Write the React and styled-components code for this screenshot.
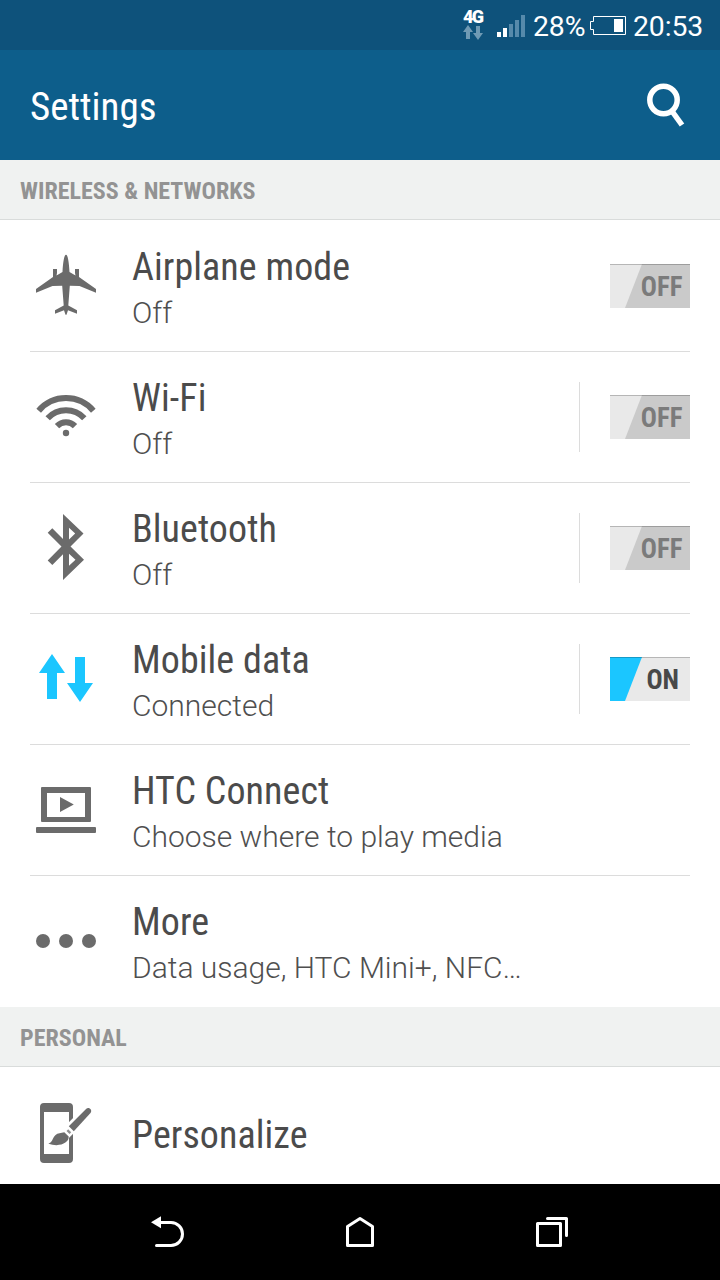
import React, { useState } from "react";
import styled, { createGlobalStyle } from "styled-components";

const GlobalStyle = createGlobalStyle`
  * {
    box-sizing: border-box;
  }

  body {
    margin: 0;
    background: #fff;
    font-family: Roboto, sans-serif;
  }

  button {
    padding: 0;
    border: 0;
    background: transparent;
    font: inherit;
  }

  svg {
    display: block;
  }
`;

const condensed = `
  font-family: "Roboto Condensed", Roboto, sans-serif;
  font-stretch: 75%;
  white-space: nowrap;
`;

const Screen = styled.div`
  display: flex;
  flex-direction: column;
  width: 720px;
  height: 1280px;
  overflow: hidden;
  background: #fff;
`;

const StatusBar = styled.div`
  display: flex;
  align-items: center;
  justify-content: flex-end;
  flex: none;
  height: 50px;
  padding-right: 16px;
  background: #0e527b;
  color: #fff;
`;

const Network = styled.div`
  display: flex;
  flex-direction: column;
  width: 20px;
  height: 50px;
  margin-right: 14px;
  padding-top: 8px;
`;

const NetworkType = styled.span`
  height: 17px;
  font-family: Roboto, sans-serif;
  font-size: 18px;
  font-weight: 900;
  line-height: 17px;
  letter-spacing: -1.6px;
`;

const StatusText = styled.span`
  width: ${(props) => props.width}px;
  padding-top: 4px;
  font-size: 28.4px;
  line-height: 34px;
  letter-spacing: -0.1px;
  white-space: nowrap;
`;

const Header = styled.header`
  display: flex;
  align-items: center;
  justify-content: space-between;
  flex: none;
  height: 110px;
  padding: 0 30px;
  background: #0d5e8b;
  color: #fff;
`;

const Title = styled.h1`
  ${condensed}
  margin: 0;
  padding-top: 3px;
  font-size: 39px;
  font-weight: 400;
  line-height: 46px;
`;

const Content = styled.main`
  flex: 1;
  min-height: 0;
  overflow: hidden;
`;

const SectionTitle = styled.h2`
  ${condensed}
  height: 60px;
  margin: 0;
  padding: 2px 20px 0;
  border-bottom: 1px solid #d9dcdb;
  background: #f0f2f1;
  color: #939393;
  font-size: 24px;
  font-weight: 700;
  line-height: 58px;
`;

const List = styled.div`
  padding: 0 30px 1px;
`;

const Row = styled.div`
  display: flex;
  height: ${(props) => props.height || 131}px;

  & + & {
    border-top: 1px solid #dcdcdc;
  }

  & + & > * {
    margin-top: -1px;
  }
`;

const IconBox = styled.div`
  flex: none;
  width: 102px;
  color: ${(props) => (props.active ? "#1bc6ff" : "#6b6b6b")};
`;

const Labels = styled.div`
  flex: 1;
  padding-top: ${(props) => (props.single ? 45 : 24)}px;
`;

const Name = styled.div`
  ${condensed}
  color: #4b4b4b;
  font-size: 38px;
  line-height: 46px;
  letter-spacing: 0.07px;
`;

const Summary = styled.div`
  color: #4f4f4f;
  font-size: 30px;
  font-weight: 300;
  line-height: 46px;
  white-space: nowrap;
`;

const ToggleArea = styled.div`
  display: flex;
  align-items: center;
  align-self: flex-start;
  height: 70px;
  && {
    margin-top: ${(props) => (props.divided ? 30 : 31)}px;
  }
  padding-left: 30px;
  border-left: 1px solid ${(props) => (props.divided ? "#dcdcdc" : "transparent")};
`;

const ToggleButton = styled.button`
  ${condensed}
  position: relative;
  width: 80px;
  height: 44px;
  background: ${(props) => (props.on ? "#e9e9e9" : "#cacaca")};
  color: ${(props) => (props.on ? "#484848" : "#7b7b7b")};
  font-size: 26.8px;
  font-weight: 700;
  line-height: 46px;
  text-align: right;
  padding-right: ${(props) => (props.on ? 11 : 7.5)}px;

  &::before {
    content: "";
    position: absolute;
    inset: 0;
    background: ${(props) => (props.on ? "#1bc6ff" : "#e9e9e9")};
    clip-path: polygon(0 0, 32px 0, 15px 100%, 0 100%);
  }

  &::after {
    content: "";
    position: absolute;
    inset: 0 0 auto;
    height: 1px;
    background: rgba(0, 0, 0, 0.22);
  }
`;

const NavBar = styled.nav`
  display: flex;
  flex: none;
  height: 96px;
  padding: 0 72px;
  background: #000;
  color: #fff;
`;

const NavButton = styled.button`
  width: 192px;
  color: #fff;
`;

const RowIcon = ({ children }) => (
  <svg width="72" height="116" viewBox="0 0 72 116" fill="currentColor">
    {children}
  </svg>
);

const NavIcon = ({ children }) => (
  <svg
    width="192"
    height="96"
    viewBox="0 0 192 96"
    fill="none"
    stroke="currentColor"
    strokeWidth="3"
    strokeLinecap="round"
    strokeLinejoin="round"
  >
    {children}
  </svg>
);

const icons = {
  airplane: (
    <RowIcon>
      <path d="M36 34.7C37.8 34.7 39 42 39.5 52L45.5 55.5L45 53V49H49V57L66 69V72.8L49.5 66L39.8 65.7L38.3 85.5L47 90.3V93.8L38 90.3L36.5 94.7H35.5L34 90.3L25 93.8V90.3L33.7 85.5L32.2 65.7L22.5 66L6 72.8V69L23 57V49H27V53L26.5 55.5L32.5 52C33 42 34.2 34.7 36 34.7Z" />
    </RowIcon>
  ),
  wifi: (
    <RowIcon>
      <circle cx="36" cy="82" r="3.2" />
      <g fill="none" stroke="currentColor" strokeWidth="6">
        <path d="M8.7 59.7A35.7 35.7 0 0 1 63.3 59.7" />
        <path d="M17.7 67.2A25 25 0 0 1 54.3 67.2" />
        <path d="M27 75.2A12.5 12.5 0 0 1 45 75.2" />
      </g>
    </RowIcon>
  ),
  bluetooth: (
    <RowIcon>
      <path
        fillRule="evenodd"
        d="M33 32L53.5 51.5L40.5 64.6L54 77.7L33 98V72.3L22.3 83L17.7 78.4L31.5 64.6L17.7 50.8L22.3 46.2L33 57ZM39 45.8V57.4L45.2 51.6ZM39 71.7V83.8L45.5 77.7Z"
      />
    </RowIcon>
  ),
  data: (
    <RowIcon>
      <path d="M22 41L35 60H27V86H17V60H9ZM45 44H55V70H63L50 89L37 70H45Z" />
    </RowIcon>
  ),
  connect: (
    <RowIcon>
      <path
        fillRule="evenodd"
        d="M12 43H60Q61 43 61 44V77Q61 78 60 78H12Q11 78 11 77V44Q11 43 12 43ZM17 49V73H55V49ZM30 53L43.8 60.6L30 68Z"
      />
      <rect x="6" y="83" width="60" height="6" rx="1" />
    </RowIcon>
  ),
  more: (
    <RowIcon>
      <circle cx="13" cy="66" r="7" />
      <circle cx="36" cy="66" r="7" />
      <circle cx="59" cy="66" r="7" />
    </RowIcon>
  ),
  personalize: (
    <RowIcon>
      <path
        fillRule="evenodd"
        d="M14 36H39Q43 36 43 40V92Q43 96 39 96H14Q10 96 10 92V40Q10 36 14 36ZM14 45V87H39V45Z"
      />
      <path d="M58 44L34 68" stroke="#fff" strokeWidth="11" />
      <path d="M56.3 41.8C58.8 39.5 62.8 42.8 60.5 46L43.8 64.3L38.8 59.3Z" />
      <path d="M37.7 60.5L42.7 65.5L40.3 68L35.2 63Z" fill="#fff" />
      <path d="M38.2 62.3L41.2 65.3L39.5 67L36.5 64Z" opacity="0.75" />
      <path d="M34.3 65.2L38.7 69.6C39.2 76.2 29 80.6 18.3 76.6C22.8 75.2 22 71.5 25.3 68.2C28 65.6 31 66.2 34.3 65.2Z" />
    </RowIcon>
  ),
};

const networkSettings = [
  { id: "airplane", name: "Airplane mode", summary: "Off", toggle: true },
  { id: "wifi", name: "Wi-Fi", summary: "Off", toggle: true, divided: true },
  { id: "bluetooth", name: "Bluetooth", summary: "Off", toggle: true, divided: true },
  { id: "data", name: "Mobile data", summary: "Connected", toggle: true, divided: true },
  { id: "connect", name: "HTC Connect", summary: "Choose where to play media" },
  { id: "more", name: "More", summary: "Data usage, HTC Mini+, NFC…" },
];

const Setting = ({ id, name, summary, toggle, divided, on, height, onToggle }) => (
  <Row height={height}>
    <IconBox active={on ? 1 : undefined}>{icons[id]}</IconBox>
    <Labels single={summary ? undefined : 1}>
      <Name>{name}</Name>
      {summary && <Summary>{summary}</Summary>}
    </Labels>
    {toggle && (
      <ToggleArea divided={divided ? 1 : undefined}>
        <ToggleButton on={on ? 1 : undefined} onClick={() => onToggle(id)}>
          {on ? "ON" : "OFF"}
        </ToggleButton>
      </ToggleArea>
    )}
  </Row>
);

const Status = () => (
  <StatusBar>
    <Network>
      <NetworkType>4G</NetworkType>
      <svg width="20" height="15" viewBox="0 0 20 15" fill="#6f9ab4">
        <path d="M5 0L10 7H7V14H3V7H0ZM13 1H17V8H20L15 15L10 8H13Z" />
      </svg>
    </Network>
    <svg width="36" height="50" viewBox="0 0 36 50" fill="#568aab">
      <path d="M0 32H4V37H0ZM6 28H10V37H6Z" fill="#fff" />
      <path d="M12 24H16V37H12ZM18 20H22V37H18ZM24 15H28V37H24Z" />
    </svg>
    <StatusText width={57}>28%</StatusText>
    <svg width="43" height="50" viewBox="0 0 43 50" fill="#fff">
      <path
        d="M3.5 16.5H35.5V34.5H3.5V29.5H.5V21.5H3.5Z"
        fill="none"
        stroke="#fff"
      />
      <path d="M24 19H33V32H24Z" />
    </svg>
    <StatusText width={71}>20:53</StatusText>
  </StatusBar>
);

const App = () => {
  const [enabled, setEnabled] = useState({ data: true });
  const handleToggle = (id) => setEnabled({ ...enabled, [id]: !enabled[id] });

  return (
    <Screen>
      <GlobalStyle />
      <Status />
      <Header>
        <Title>Settings</Title>
        <svg
          width="44"
          height="110"
          viewBox="646 50 44 110"
          fill="none"
          stroke="#fff"
          strokeWidth="5.5"
        >
          <circle cx="663.5" cy="100" r="13.7" />
          <path d="M671.5 110.5L682 125" />
        </svg>
      </Header>
      <Content>
        <SectionTitle>WIRELESS &amp; NETWORKS</SectionTitle>
        <List>
          {networkSettings.map((setting) => (
            <Setting
              key={setting.id}
              {...setting}
              on={enabled[setting.id]}
              onToggle={handleToggle}
            />
          ))}
        </List>
        <SectionTitle>PERSONAL</SectionTitle>
        <List>
          <Setting id="personalize" name="Personalize" height={117} />
        </List>
      </Content>
      <NavBar>
        <NavButton aria-label="Back">
          <NavIcon>
            <path d="M88 38.5H99A11.5 11.5 0 0 1 99 61.5H84.5" />
            <path d="M79 38.3L89 32.3V44.3Z" fill="currentColor" stroke="none" />
          </NavIcon>
        </NavButton>
        <NavButton aria-label="Home">
          <NavIcon>
            <path d="M83.5 42.5L96 34.5L108.5 42.5V61.5H83.5Z" />
          </NavIcon>
        </NavButton>
        <NavButton aria-label="Recent apps">
          <NavIcon>
            <path d="M81.5 39.5H104.5V61.5H81.5ZM91.5 34.5H110.5V51.5" />
          </NavIcon>
        </NavButton>
      </NavBar>
    </Screen>
  );
};

export default App;
